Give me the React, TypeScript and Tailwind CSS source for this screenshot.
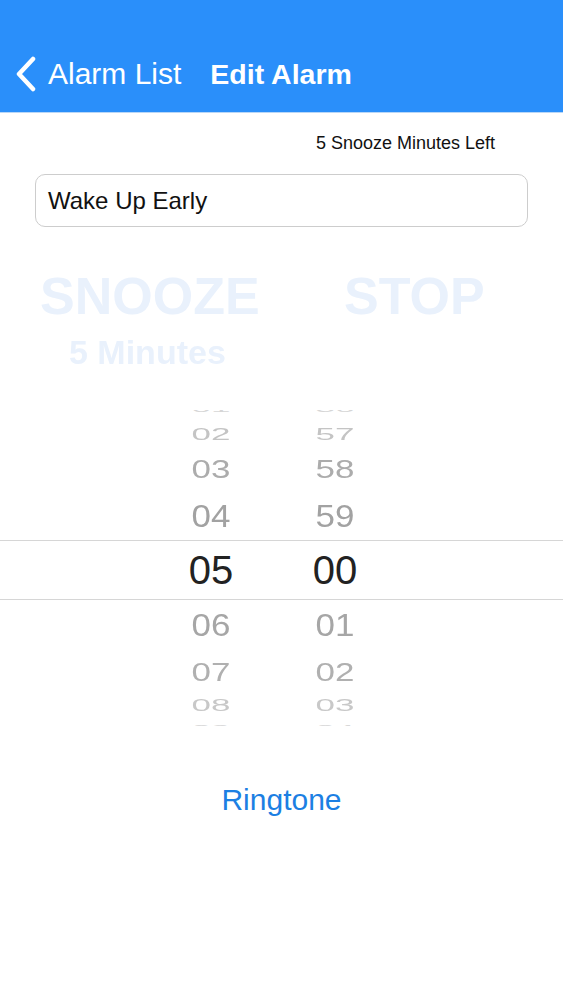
const hours = [
  { h: '01', m: '56', row: 'h-[12px] items-end', text: 'scale-y-[0.3] translate-y-[4px] text-[#d6d6d6]' },
  { h: '02', m: '57', row: 'h-[24px] items-center', text: 'scale-y-[0.45] text-[#c4c4c4]' },
  { h: '03', m: '58', row: 'h-[44px] items-center', text: 'scale-y-[0.76] text-[#acacac]' },
  { h: '04', m: '59', row: 'h-[50px] items-center', text: 'scale-y-[0.9] text-[#a2a2a2]' },
];

const after = [
  { h: '06', m: '01', row: 'h-[49px] items-center', text: 'scale-y-[0.9] text-[#a6a6a6]' },
  { h: '07', m: '02', row: 'h-[45px] items-center', text: 'scale-y-[0.76] text-[#b0b0b0]' },
  { h: '08', m: '03', row: 'h-[22px] items-center', text: 'scale-y-[0.45] text-[#c8c8c8]' },
  { h: '09', m: '04', row: 'h-[10px] items-start', text: 'scale-y-[0.3] -translate-y-[4px] text-[#d8d8d8]' },
];

function PickerRow({ h, m, row, text }: { h: string; m: string; row: string; text: string }) {
  return (
    <div className={`flex overflow-hidden pl-[161px] gap-[24px] ${row}`}>
      <div className={`w-[100px] text-center text-[35px] leading-none ${text}`}>{h}</div>
      <div className={`w-[100px] text-center text-[35px] leading-none ${text}`}>{m}</div>
    </div>
  );
}

export default function App() {
  return (
    <div className="w-[563px] h-[1000px] bg-white font-['Liberation_Sans',Arial,sans-serif] overflow-hidden">
      {/* nav bar */}
      <div className="h-[113px] bg-[#2a8ffa] border-b border-[#b9d7f7] flex items-center pt-[36px] pl-[14px] text-white">
        <svg width="24" height="36" viewBox="0 0 24 36" className="mr-[10px]">
          <polyline points="19,3 5,18 19,33" fill="none" stroke="white" strokeWidth="4.5" strokeLinecap="round" strokeLinejoin="round" />
        </svg>
        <span className="text-[30px] leading-none">Alarm List</span>
        <span className="text-[28.5px] font-bold leading-none ml-[29px]">Edit Alarm</span>
      </div>

      <div className="h-[61px] flex items-center justify-end pr-[68px] text-[18px] text-[#111]">
        5 Snooze Minutes Left
      </div>

      <div className="mx-[35px] h-[53px] border border-[#cdcdcd] rounded-[10px] flex items-center pl-[12px] text-[24px] text-[#111]">
        Wake Up Early
      </div>

      {/* faded buttons */}
      <div className="mt-[43px] flex pl-[40px] text-[52px] leading-[52px] font-bold text-[#e9f1fc] blur-[0.6px]">
        <span className="w-[304px]">SNOOZE</span>
        <span>STOP</span>
      </div>
      <div className="mt-[13px] pl-[69px] text-[34px] leading-[34px] font-bold text-[#e9f1fc] blur-[0.6px]">
        5 Minutes
      </div>

      {/* picker */}
      <div className="mt-[41px]">
        {hours.map((r) => (
          <PickerRow key={r.h} {...r} />
        ))}
        <div className="h-[60px] border-y border-[#d6d6d6] flex items-center pl-[161px] gap-[24px] text-[#222]">
          <div className="w-[100px] text-center text-[40px] leading-none">05</div>
          <div className="w-[100px] text-center text-[40px] leading-none">00</div>
        </div>
        {after.map((r) => (
          <PickerRow key={r.h} {...r} />
        ))}
      </div>

      <div className="mt-[59px] text-center text-[30px] leading-[30px] text-[#1c7fe3]">Ringtone</div>
    </div>
  );
}
